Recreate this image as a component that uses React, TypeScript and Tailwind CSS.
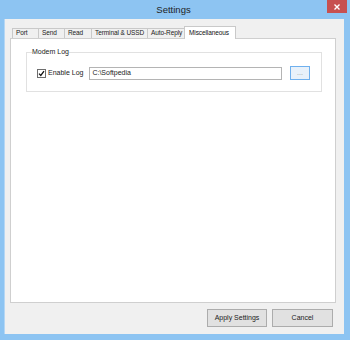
const tabs = [
  { label: 'Port', w: 'w-[27px]' },
  { label: 'Send', w: 'w-[27px]' },
  { label: 'Read', w: 'w-[28px]' },
  { label: 'Terminal & USSD', w: 'w-[57px]' },
  { label: 'Auto-Reply', w: 'w-[38px]' },
]

export default function App() {
  return (
    <div className="w-[350px] h-[340px] bg-[#8dc4f2] flex flex-col font-['Liberation_Sans',Arial,sans-serif] text-[7px] text-black">
      {/* title bar */}
      <div className="h-[19px] shrink-0 flex items-start">
        <div className="flex-1" />
        <div className="text-[9.5px] leading-[19px] text-[#1f1f1f]">Settings</div>
        <div className="flex-1 flex justify-end pr-[3px]">
          <div className="w-[20px] h-[13px] bg-[#c75050] flex items-center justify-center">
            <svg width="6" height="6" viewBox="0 0 6 6">
              <path d="M0.5 0.5 L5.5 5.5 M5.5 0.5 L0.5 5.5" stroke="#fff" strokeWidth="1.4" />
            </svg>
          </div>
        </div>
      </div>

      <div className="flex-1 flex pl-[4px] pr-[6px] pb-[6px]">
        <div className="flex-1 bg-[#f0f0f0] border-l border-[#b5d7f5] flex flex-col pt-[7px] pb-[7px]">
          <div className="flex-1 flex flex-col pl-[5px] pr-[8px]">
            {/* tab strip */}
            <div className="h-[12px] flex items-end pl-[2px] relative z-10 text-[6.5px] tracking-[-0.1px]">
              {tabs.map(t => (
                <div
                  key={t.label}
                  className={`${t.w} h-[10px] pl-[3px] -mr-px border border-b-0 border-[#c9c9c9] bg-[#f0f0f0] flex items-center leading-none text-[#222] whitespace-nowrap overflow-hidden`}
                >
                  {t.label}
                </div>
              ))}
              <div className="w-[52px] h-[13px] -mb-px pl-[4px] border border-b-0 border-[#c9c9c9] bg-white flex items-center leading-none text-[#111] whitespace-nowrap">
                Miscellaneous
              </div>
            </div>

            {/* panel */}
            <div className="flex-1 bg-white border border-[#cfcfcf] pl-[15px] pr-[13px] pt-[9px]">
              <fieldset className="border border-[#e1e1e1] px-[5px] pb-[11px]">
                <legend className="px-0 leading-[8px] text-[#222]">Modem Log</legend>
                <div className="flex items-center mt-[10px]">
                  <div className="w-[9px] h-[9px] ml-[5px] border border-[#6d6d6d] bg-white flex items-center justify-center">
                    <svg width="7" height="7" viewBox="0 0 7 7">
                      <path d="M1 3.6 L2.8 5.4 L6 1.2" stroke="#111" strokeWidth="1.3" fill="none" />
                    </svg>
                  </div>
                  <span className="ml-[2px] text-[#222]">Enable Log</span>
                  <div className="ml-[6px] flex-1 h-[13px] border border-[#b4b4b4] bg-white flex items-center pl-[2px] text-[#222]">
                    C:\Softpedia
                  </div>
                  <div className="ml-[8px] mr-[6px] w-[20px] h-[14px] border border-[#6fb0ee] bg-[#e8f1fa] flex items-center justify-center text-[#999] leading-none pb-[2px]">
                    ...
                  </div>
                </div>
              </fieldset>
            </div>
          </div>

          {/* buttons */}
          <div className="h-[18px] mt-[6px] flex justify-end gap-[5px] pr-[11px]">
            <div className="w-[60px] border border-[#acacac] bg-[#e1e1e1] flex items-center justify-center text-[#222]">
              Apply Settings
            </div>
            <div className="w-[61px] border border-[#acacac] bg-[#e1e1e1] flex items-center justify-center text-[#222]">
              Cancel
            </div>
          </div>
        </div>
      </div>
    </div>
  )
}
